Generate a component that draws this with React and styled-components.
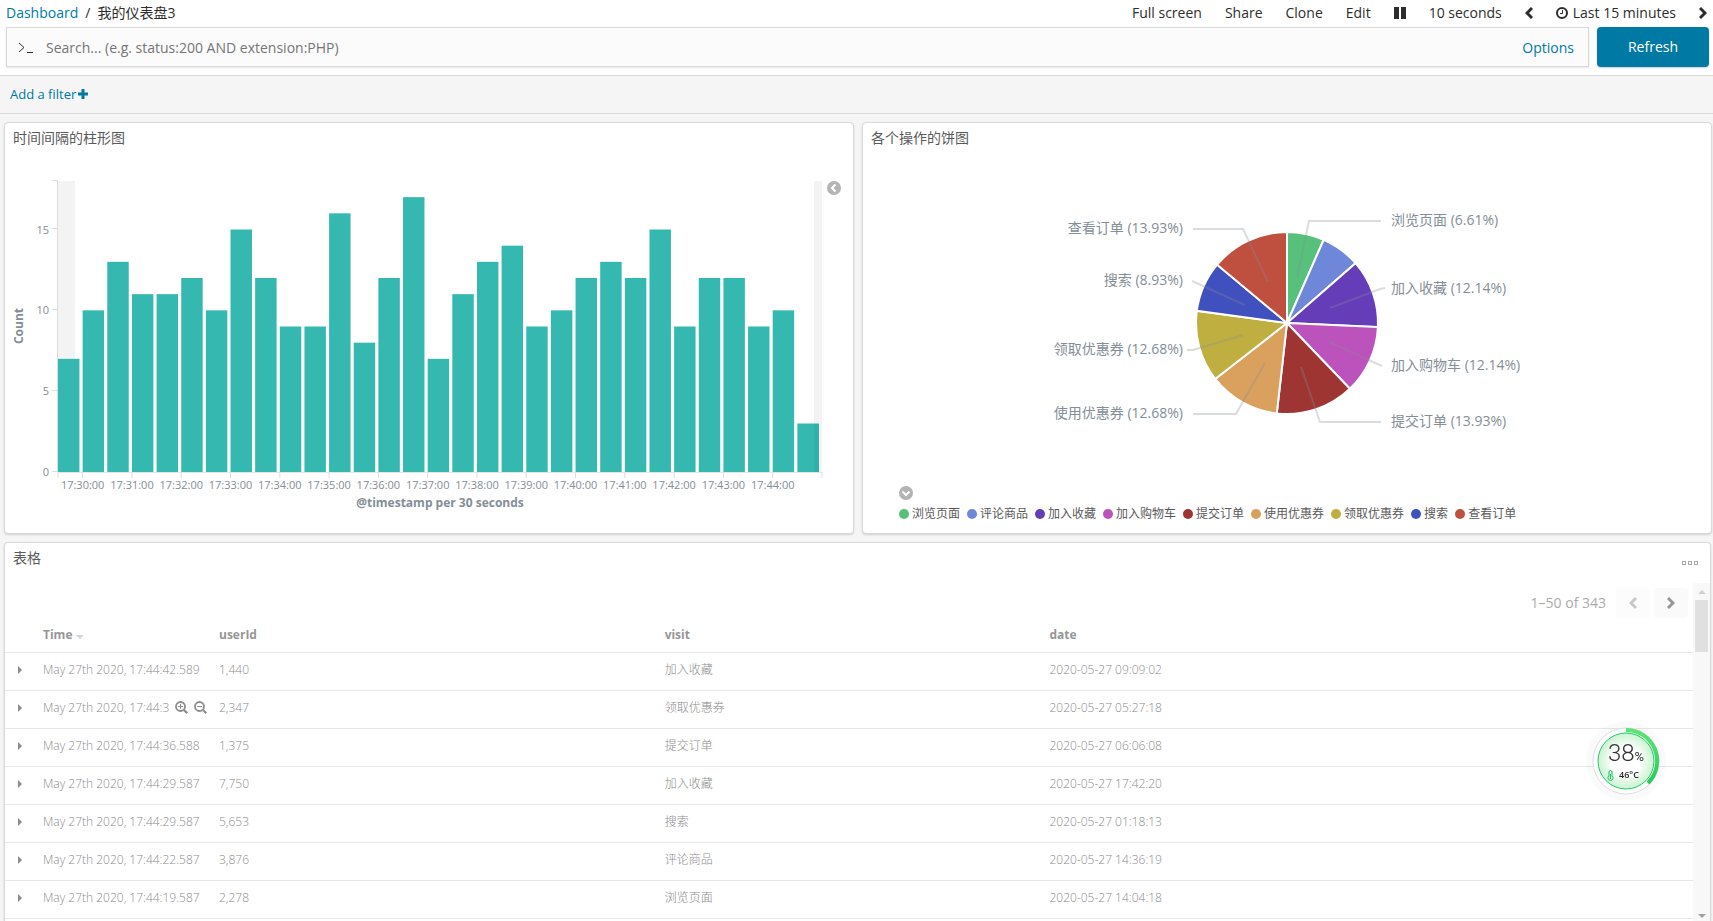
import React from 'react';
import styled, { createGlobalStyle, css } from 'styled-components';

const bars = [
  7, 10, 13, 11, 11, 12, 10, 15, 12, 9, 9, 16, 8, 12, 17, 7, 11, 13, 14, 9, 10,
  12, 13, 12, 15, 9, 12, 12, 9, 10, 3,
];

const slices = [
  { name: '浏览页面', count: 37, color: '#57c17b', text: [528, 72], line: '434,130 446,73 518,73' },
  { name: '评论商品', count: 39, color: '#6f87d8' },
  { name: '加入收藏', count: 68, color: '#663db8', text: [528, 140], line: '467,160 517,141 522,140' },
  { name: '加入购物车', count: 68, color: '#bc52bc', text: [528, 217], line: '466,194 519,218' },
  { name: '提交订单', count: 78, color: '#9e3533', text: [528, 273], line: '438,219 457,274 518,274' },
  { name: '使用优惠券', count: 71, color: '#daa05d', text: [320, 265], line: '402,215 373,266 330,266' },
  { name: '领取优惠券', count: 71, color: '#bfaf40', text: [320, 201], line: '380,187 330,202 324,202' },
  { name: '搜索', count: 50, color: '#4050bf', text: [320, 132], line: '382,157 329,133' },
  { name: '查看订单', count: 78, color: '#bf5040', text: [320, 80], line: '405,134 380,81 330,81' },
];

const rows = [
  { time: 'May 27th 2020, 17:44:42.589', userId: '1,440', visit: '加入收藏', date: '2020-05-27 09:09:02' },
  { time: 'May 27th 2020, 17:44:3', userId: '2,347', visit: '领取优惠券', date: '2020-05-27 05:27:18', hover: true },
  { time: 'May 27th 2020, 17:44:36.588', userId: '1,375', visit: '提交订单', date: '2020-05-27 06:06:08' },
  { time: 'May 27th 2020, 17:44:29.587', userId: '7,750', visit: '加入收藏', date: '2020-05-27 17:42:20' },
  { time: 'May 27th 2020, 17:44:29.587', userId: '5,653', visit: '搜索', date: '2020-05-27 01:18:13' },
  { time: 'May 27th 2020, 17:44:22.587', userId: '3,876', visit: '评论商品', date: '2020-05-27 14:36:19' },
  { time: 'May 27th 2020, 17:44:19.587', userId: '2,278', visit: '浏览页面', date: '2020-05-27 14:04:18' },
];

const ChevronIcon = ({ dir = 'left' }) => (
  <svg width="8" height="14" viewBox="0 0 8 14" aria-hidden="true">
    <path
      d={dir === 'left' ? 'M7 2 L2 7 L7 12' : 'M1 2 L6 7 L1 12'}
      fill="none"
      stroke="currentColor"
      strokeWidth="3"
    />
  </svg>
);

const ClockIcon = () => (
  <svg width="12" height="14" viewBox="0 0 12 14" aria-hidden="true">
    <circle cx="6" cy="7" r="5" fill="none" stroke="currentColor" strokeWidth="2" />
    <path d="M6.5 4 V7.5 H4" fill="none" stroke="currentColor" />
  </svg>
);

const CircleChevronIcon = ({ dir }) => (
  <svg width="14" height="14" viewBox="0 0 14 14" aria-hidden="true">
    <circle cx="7" cy="7" r="7" fill="currentColor" />
    <path
      d={dir === 'left' ? 'M8.5 3.5 L5 7 L8.5 10.5' : 'M3.5 5.5 L7 9 L10.5 5.5'}
      fill="none"
      stroke="#fff"
      strokeWidth="2"
    />
  </svg>
);

const MagnifyIcon = ({ plus }) => (
  <svg width="13" height="13" viewBox="0 0 13 13" aria-hidden="true">
    <circle cx="5.5" cy="5.5" r="4.5" fill="none" stroke="currentColor" strokeWidth="1.8" />
    <path d="M9 9 L12.2 12.2" stroke="currentColor" strokeWidth="2.2" />
    <path d={plus ? 'M3 5.5 H8 M5.5 3 V8' : 'M3 5.5 H8'} stroke="currentColor" />
  </svg>
);

const BarChart = () => {
  const x0 = 53;
  const x1 = 817;
  const y0 = 324;
  const step = (x1 - x0) / bars.length;
  const unit = 291 / 18;
  return (
    <StChart viewBox="0 0 848 385" role="img" aria-label="Count per 30 seconds">
      <rect x={x0} y="33" width="17" height="291" fill="#f3f3f3" />
      <rect x="809" y="33" width="8" height="291" fill="#f3f3f3" />
      <g stroke="#ddd" fill="none">
        <path d={`M${x0 - 6} 32.5 H${x0 - 0.5} V${y0}`} />
        <path d={`M${x0} ${y0 + 0.5} H${x1}`} stroke="#e6e6e6" />
        {[0, 5, 10, 15].map((v) => (
          <path key={v} d={`M${x0 - 6} ${Math.round(y0 - v * unit) - 0.5} h6`} />
        ))}
        {[x0, x1, ...Array.from({ length: 15 }, (_, i) => x0 + step * (2 * i + 1))].map((x) => (
          <path key={x} d={`M${x} ${y0} v6`} />
        ))}
      </g>
      {bars.map((v, i) => (
        <rect
          key={i}
          x={x0 + i * step}
          y={y0 - v * unit}
          width={step * 0.87}
          height={v * unit}
          fill="#34b8b0"
        />
      ))}
      <rect x="809" y="276" width="5" height="48" fill="#31b0a8" />
      {[0, 5, 10, 15].map((v) => (
        <StTick key={v} x="44" y={y0 - v * unit + 4} textAnchor="end">
          {v}
        </StTick>
      ))}
      {Array.from({ length: 15 }, (_, i) => (
        <StTick key={i} x={x0 + step * (2 * i + 1)} y="341" textAnchor="middle">
          {`17:${30 + i}:00`}
        </StTick>
      ))}
      <StAxisTitle x="435" y="359">
        @timestamp per 30 seconds
      </StAxisTitle>
      <StAxisTitle transform="translate(18 178) rotate(-90)">Count</StAxisTitle>
    </StChart>
  );
};

const PieChart = () => {
  const total = slices.reduce((sum, s) => sum + s.count, 0);
  const [cx, cy, r] = [424, 175, 91];
  let angle = 0;
  const point = (a) =>
    `${(cx + r * Math.sin(a)).toFixed(2)} ${(cy - r * Math.cos(a)).toFixed(2)}`;
  return (
    <StChart viewBox="0 0 848 334" role="img" aria-label="各个操作的饼图">
      {slices.map((s) => {
        const from = angle;
        angle += (s.count / total) * Math.PI * 2;
        return (
          <path
            key={s.name}
            d={`M${cx} ${cy} L${point(from)} A${r} ${r} 0 0 1 ${point(angle)} Z`}
            fill={s.color}
            stroke="#fff"
            strokeWidth="2"
          />
        );
      })}
      {slices
        .filter((s) => s.line)
        .map((s) => (
          <g key={s.name}>
            <polyline
              points={s.line}
              fill="none"
              stroke="#848e96"
              strokeOpacity="0.3"
              strokeWidth="2"
            />
            <StPieLabel
              x={s.text[0]}
              y={s.text[1] + 5}
              textAnchor={s.text[0] < cx ? 'end' : 'start'}
            >
              {`${s.name} (${((s.count / total) * 100).toFixed(2)}%)`}
            </StPieLabel>
          </g>
        ))}
    </StChart>
  );
};

const LoadGauge = () => (
  <StGauge>
    <svg width="84" height="84" viewBox="0 0 84 84" aria-hidden="true">
      <defs>
        <radialGradient id="gaugeFill">
          <stop offset="0.5" stopColor="#fff" />
          <stop offset="1" stopColor="#c9f3cf" />
        </radialGradient>
        <linearGradient id="gaugeArc" x1="0" y1="0" x2="0" y2="1">
          <stop offset="0" stopColor="#5be573" />
          <stop offset="1" stopColor="#22cc5c" />
        </linearGradient>
      </defs>
      <circle cx="42" cy="42" r="40" fill="#000" fillOpacity="0.02" />
      <circle cx="42" cy="42" r="33" fill="#fff" stroke="#ddd" />
      <path d="M42 11 A31 31 0 0 1 64 64" fill="none" stroke="url(#gaugeArc)" strokeWidth="4" />
      <circle cx="42" cy="42" r="28" fill="url(#gaugeFill)" stroke="#1fcc62" />
    </svg>
    <StGaugeText>
      <StLoad>
        38<small>%</small>
      </StLoad>
      <StTemp>
        <svg width="7" height="11" viewBox="0 0 7 11" aria-hidden="true">
          <path
            d="M2 6 V2 A1.5 1.5 0 0 1 5 2 V6 A2.5 2.5 0 1 1 2 6 Z"
            fill="none"
            stroke="#12c25b"
          />
          <path d="M3.5 4 V9" stroke="#12c25b" />
        </svg>
        46°C
      </StTemp>
    </StGaugeText>
  </StGauge>
);

const App = () => {
  return (
    <StPage>
      <GlobalStyle />
      <StHeader>
        <StNav>
          <StCrumbs>
            <StLink href="#dashboards">Dashboard</StLink>
            <span>/</span>
            <strong>我的仪表盘3</strong>
          </StCrumbs>
          <StMenu>
            <StNavButton>Full screen</StNavButton>
            <StNavButton>Share</StNavButton>
            <StNavButton>Clone</StNavButton>
            <StNavButton>Edit</StNavButton>
            <StNavButton aria-label="Pause">
              <svg width="12" height="12" viewBox="0 0 12 12" aria-hidden="true">
                <path d="M0 0 H5 V12 H0 Z M7 0 H12 V12 H7 Z" fill="currentColor" />
              </svg>
            </StNavButton>
            <StNavButton>10 seconds</StNavButton>
            <StNavButton aria-label="Previous period">
              <ChevronIcon />
            </StNavButton>
            <StNavButton>
              <ClockIcon /> Last 15 minutes
            </StNavButton>
            <StNavButton aria-label="Next period">
              <ChevronIcon dir="right" />
            </StNavButton>
          </StMenu>
        </StNav>
        <StSearchRow>
          <StSearchBox>
            <StPrompt width="16" height="12" viewBox="0 0 16 12" aria-hidden="true">
              <path d="M1 1 L6 5.5 L1 10 M9 10.5 H15" fill="none" stroke="currentColor" />
            </StPrompt>
            <StSearchInput
              aria-label="Search"
              placeholder="Search... (e.g. status:200 AND extension:PHP)"
            />
            <StLink href="#options">Options</StLink>
          </StSearchBox>
          <StRefresh>Refresh</StRefresh>
        </StSearchRow>
      </StHeader>
      <StFilterBar>
        <StFilterButton>
          Add a filter
          <svg width="10" height="10" viewBox="0 0 10 10" aria-hidden="true">
            <path d="M5 0 V10 M0 5 H10" stroke="currentColor" strokeWidth="3" />
          </svg>
        </StFilterButton>
      </StFilterBar>
      <StGrid>
        <StPanel>
          <StPanelTitle>时间间隔的柱形图</StPanelTitle>
          <BarChart />
          <StCollapse aria-label="Toggle legend">
            <CircleChevronIcon dir="left" />
          </StCollapse>
        </StPanel>
        <StPanel>
          <StPanelTitle>各个操作的饼图</StPanelTitle>
          <PieChart />
          <StLegend>
            <StLegendToggle aria-label="Toggle legend">
              <CircleChevronIcon dir="down" />
            </StLegendToggle>
            <ul>
              {slices.map((s) => (
                <StLegendItem key={s.name} $color={s.color}>
                  {s.name}
                </StLegendItem>
              ))}
            </ul>
          </StLegend>
        </StPanel>
        <StPanel $wide>
          <StPanelHead>
            <StPanelTitle>表格</StPanelTitle>
            <StMore aria-label="Panel options">
              <i />
              <i />
              <i />
            </StMore>
          </StPanelHead>
          <StScrollArea>
            <StTableWrap>
              <StPager>
                <span>1–50 of 343</span>
                <StPageButton disabled aria-label="Previous page">
                  <ChevronIcon />
                </StPageButton>
                <StPageButton aria-label="Next page">
                  <ChevronIcon dir="right" />
                </StPageButton>
              </StPager>
              <StTable>
                <colgroup>
                  <StCol $w="30px" />
                  <StCol $w="176px" />
                  <StCol $w="26.4%" />
                  <StCol $w="22.8%" />
                  <StCol />
                </colgroup>
                <thead>
                  <tr>
                    <th aria-label="Expand" />
                    <th>
                      Time <StSort />
                    </th>
                    <th>userId</th>
                    <th>visit</th>
                    <th>date</th>
                  </tr>
                </thead>
                <tbody>
                  {rows.map((row, i) => (
                    <tr key={i}>
                      <td>
                        <StExpand aria-label="Expand row" />
                      </td>
                      <td>
                        {row.time}
                        {row.hover && (
                          <StCellTools>
                            <button aria-label="Filter for value">
                              <MagnifyIcon plus />
                            </button>
                            <button aria-label="Filter out value">
                              <MagnifyIcon />
                            </button>
                          </StCellTools>
                        )}
                      </td>
                      <td>{row.userId}</td>
                      <td>{row.visit}</td>
                      <td>{row.date}</td>
                    </tr>
                  ))}
                </tbody>
              </StTable>
            </StTableWrap>
            <StScrollbar>
              <StArrow />
              <StThumb />
              <StArrow $down />
            </StScrollbar>
          </StScrollArea>
        </StPanel>
      </StGrid>
      <LoadGauge />
    </StPage>
  );
};

const GlobalStyle = createGlobalStyle`
  * {
    box-sizing: border-box;
  }

  body {
    margin: 0;
    color: #2d2d2d;
    font-family: 'Open Sans', 'Noto Sans CJK SC', sans-serif;
    font-size: 14px;
    line-height: 20px;
  }

  button {
    padding: 0;
    border: none;
    background: none;
    color: inherit;
    font: inherit;
    cursor: pointer;
  }

  ul {
    margin: 0;
    padding: 0;
    list-style: none;
  }
`;

const StPage = styled.div`
  display: flex;
  flex-direction: column;
  height: 100vh;
  overflow: hidden;
  background-color: #f5f5f5;
`;

const StHeader = styled.header`
  padding: 3px 4px 8px 6px;
  background-color: #fff;
  border-bottom: 1px solid #d9d9d9;
`;

const StNav = styled.nav`
  display: flex;
  justify-content: space-between;
  margin-bottom: 4px;
`;

const StCrumbs = styled.div`
  display: flex;
  gap: 7px;

  strong {
    font-weight: 400;
  }
`;

const StLink = styled.a`
  color: #0079a5;
  text-decoration: none;
`;

const StMenu = styled.div`
  display: flex;
  gap: 23px;
  padding-right: 2px;
`;

const StNavButton = styled.button`
  display: flex;
  align-items: center;
  gap: 5px;
`;

const StSearchRow = styled.div`
  display: flex;
  gap: 8px;
`;

const StSearchBox = styled.div`
  display: flex;
  flex: 1;
  align-items: center;
  height: 40px;
  padding: 2px 14px 0 11px;
  border: 1px solid #d9d9d9;
  background-color: #fbfbfb;
  box-shadow: 0 1px 2px rgba(0, 0, 0, 0.1);
`;

const StPrompt = styled.svg`
  margin-right: 12px;
`;

const StSearchInput = styled.input`
  flex: 1;
  padding: 0;
  border: none;
  outline: none;
  background: none;
  font: inherit;

  &::placeholder {
    color: #757575;
  }
`;

const StRefresh = styled.button`
  width: 112px;
  height: 40px;
  border-radius: 4px;
  background-color: #0079a5;
  color: #fff;
  box-shadow: 0 1px 2px rgba(0, 0, 0, 0.2);
`;

const StFilterBar = styled.div`
  display: flex;
  align-items: center;
  height: 38px;
  padding: 0 10px 2px;
  border-bottom: 1px solid #d9d9d9;
`;

const StFilterButton = styled.button`
  display: flex;
  align-items: center;
  gap: 2px;
  color: #0079a5;
  font-size: 13px;
`;

const StGrid = styled.main`
  display: grid;
  flex: 1;
  grid-template-columns: 1fr 1fr;
  grid-template-rows: auto 1fr;
  gap: 8px;
  min-height: 0;
  padding: 8px 1px 0 4px;
`;

const StPanel = styled.section`
  position: relative;
  display: flex;
  flex-direction: column;
  min-width: 0;
  min-height: 0;
  border: 1px solid #d9d9d9;
  border-radius: 4px;
  background-color: #fff;
  box-shadow: 0 1px 2px rgba(0, 0, 0, 0.15);

  ${({ $wide }) =>
    $wide &&
    css`
      grid-column: 1 / -1;
      margin-right: 1px;
      border-bottom: none;
      border-radius: 4px 4px 0 0;
    `}
`;

const StPanelHead = styled.div`
  display: flex;
  justify-content: space-between;
  height: 40px;
`;

const StPanelTitle = styled.h2`
  margin: 0;
  padding: 5px 8px 0;
  color: #5a5a5a;
  font-size: 14px;
  font-weight: 400;
  line-height: 20px;
`;

const StMore = styled.button`
  display: flex;
  align-items: center;
  gap: 2px;
  margin-right: 12px;

  i {
    width: 4px;
    height: 4px;
    border: 1px solid #aaa;
  }
`;

const StChart = styled.svg`
  display: block;
  width: 100%;
  height: auto;
`;

const StTick = styled.text`
  fill: #848e96;
  font-size: 11px;
`;

const StAxisTitle = styled.text`
  fill: #848e96;
  font-size: 12px;
  font-weight: 700;
  text-anchor: middle;
`;

const StPieLabel = styled.text`
  fill: #848e96;
  font-size: 14px;
`;

const StCollapse = styled.button`
  position: absolute;
  top: 58px;
  right: 12px;
  height: 14px;
  color: #b4b4b4;
  line-height: 0;
`;

const StLegend = styled.div`
  padding: 0 36px;
  color: #5a5a5a;
  font-size: 12px;

  ul {
    display: flex;
    flex-wrap: wrap;
    gap: 7px;
    line-height: 20px;
  }
`;

const StLegendToggle = styled.button`
  display: block;
  height: 14px;
  margin: 4px 0;
  color: #b4b4b4;
  line-height: 0;
`;

const StLegendItem = styled.li`
  display: flex;
  align-items: center;
  gap: 3px;

  &::before {
    width: 10px;
    height: 10px;
    border-radius: 50%;
    background-color: ${({ $color }) => $color};
    content: '';
  }
`;

const StScrollArea = styled.div`
  display: flex;
  flex: 1;
  min-height: 0;
`;

const StTableWrap = styled.div`
  flex: 1;
  overflow: hidden;
`;

const StPager = styled.div`
  display: flex;
  align-items: center;
  justify-content: flex-end;
  gap: 4px;
  padding: 5px 5px 0 0;
  color: #aaa;

  span {
    margin-right: 6px;
  }
`;

const StPageButton = styled.button`
  display: flex;
  align-items: center;
  justify-content: center;
  width: 34px;
  height: 30px;
  border-radius: 4px;
  background-color: #fafafa;
  color: #969696;

  &:disabled {
    background-color: #fcfcfc;
    color: #c8c8c8;
  }
`;

const StTable = styled.table`
  width: 100%;
  border-collapse: collapse;
  table-layout: fixed;
  color: #8c8c8c;
  font-size: 12px;
  line-height: 20px;

  th,
  td {
    height: 38px;
    padding: 7px 8px 10px;
    border-bottom: 1px solid #e8e8e8;
    text-align: left;
    white-space: nowrap;
  }

  th {
    height: 34px;
    padding: 7px 8px 6px;
    color: #969696;
  }

  td {
    font-weight: 300;
  }
`;

const StCol = styled.col`
  width: ${({ $w }) => $w || 'auto'};
`;

const StSort = styled.i`
  display: inline-block;
  border: 4px solid transparent;
  border-top-color: #d2d6d9;
  border-bottom: none;
`;

const StExpand = styled.button`
  display: block;
  margin-left: 5px;
  border: 4px solid transparent;
  border-right: none;
  border-left-color: #8c8c8c;
`;

const StCellTools = styled.span`
  display: inline-flex;
  gap: 6px;
  height: 20px;
  margin-left: 6px;
  vertical-align: top;

  svg {
    display: block;
  }
`;

const StScrollbar = styled.div`
  display: flex;
  flex-direction: column;
  align-items: center;
  width: 17px;
  padding: 7px 0 3px;
  background-color: #f8f8f8;
`;

const StArrow = styled.i`
  border: 4px solid transparent;
  border-top: none;
  border-bottom-color: #d0d0d0;

  ${({ $down }) =>
    $down &&
    css`
      margin-top: auto;
      border-top: 4px solid #a0a0a0;
      border-bottom: none;
    `}
`;

const StThumb = styled.div`
  width: 13px;
  height: 52px;
  margin-top: 6px;
  background-color: #e0e0e0;
`;

const StGauge = styled.aside`
  position: fixed;
  right: 45px;
  bottom: 118px;
  width: 84px;
  height: 84px;
`;

const StGaugeText = styled.div`
  position: absolute;
  inset: 0;
  display: flex;
  flex-direction: column;
  align-items: center;
  justify-content: center;
`;

const StLoad = styled.div`
  color: #333;
  font-family: Roboto, sans-serif;
  font-size: 24px;
  font-weight: 300;
  line-height: 24px;

  small {
    font-size: 13px;
    font-weight: 400;
  }
`;

const StTemp = styled.div`
  display: flex;
  align-items: center;
  gap: 5px;
  padding-right: 6px;
  font-size: 9px;
  font-weight: 600;
  line-height: 12px;
`;

export default App;
